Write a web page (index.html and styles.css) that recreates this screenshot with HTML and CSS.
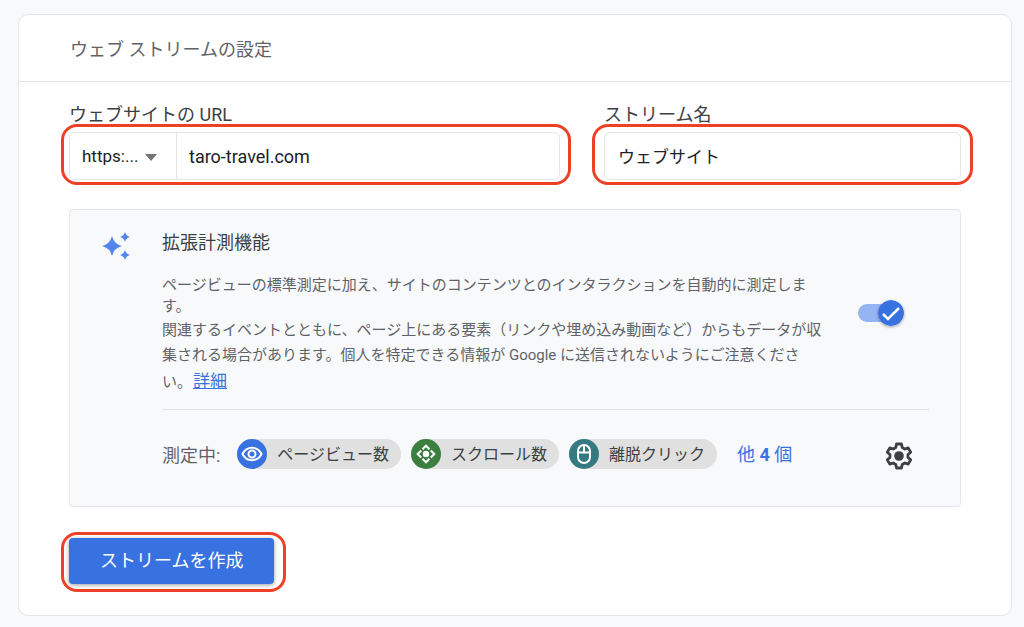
FILE: index.html
```html
<!DOCTYPE html>
<html lang="ja">
<head>
<meta charset="utf-8">
<meta name="viewport" content="width=device-width, initial-scale=1">
<title>ウェブ ストリームの設定</title>
<link rel="stylesheet" href="styles.css">
</head>
<body>
<main class="card">
  <header class="card-header">
    <h1 class="card-title">ウェブ ストリームの設定</h1>
  </header>
  <form class="card-body">
    <div class="fields">
      <div class="field">
        <label class="field-label" for="url">ウェブサイトの URL</label>
        <div class="control highlight">
          <div class="protocol">
            <select class="protocol-select" aria-label="プロトコル">
              <option>https:...</option>
              <option>http:...</option>
            </select>
            <svg class="caret" viewBox="0 0 12 7" aria-hidden="true"><path d="M0 0h12L6 7z"/></svg>
          </div>
          <input class="text-input" id="url" type="text" value="taro-travel.com">
        </div>
      </div>
      <div class="field">
        <label class="field-label" for="name">ストリーム名</label>
        <div class="control highlight">
          <input class="text-input name-input" id="name" type="text" value="ウェブサイト">
        </div>
      </div>
    </div>

    <section class="panel">
      <svg class="sparkle" viewBox="0 0 29 29" aria-hidden="true">
        <path d="M10 4Q12 12 20 14Q12 16 10 24Q8 16 0 14Q8 12 10 4zM23 0Q24 4 28 5Q24 6 23 10Q22 6 18 5Q22 4 23 0zM23 18Q24 22 28 23Q24 24 23 28Q22 24 18 23Q22 22 23 18z"/>
      </svg>
      <div class="panel-content">
        <h2 class="panel-title">拡張計測機能</h2>
        <div class="description">
          <div class="description-text">
            <p class="lead">ページビューの標準測定に加え、サイトのコンテンツとのインタラクションを自動的に測定します。</p>
            <p class="note">関連するイベントとともに、ページ上にある要素（リンクや埋め込み動画など）からもデータが収集される場合があります。個人を特定できる情報が Google に送信されないようにご注意ください。<a class="more-link" href="#">詳細</a></p>
          </div>
          <label class="toggle">
            <input class="toggle-input" type="checkbox" checked aria-label="拡張計測機能">
            <svg class="toggle-knob" viewBox="0 0 26 26" aria-hidden="true">
              <circle cx="13" cy="13" r="13"/>
              <path d="M5 14l5 5L21 8"/>
            </svg>
          </label>
        </div>
        <div class="measuring">
          <span class="measuring-label">測定中:</span>
          <ul class="chips">
            <li class="chip">
              <svg class="chip-icon blue" viewBox="0 0 30 30" aria-hidden="true">
                <path d="M5.500 15C7.500 11 11 8.800 15 8.800S22.500 11 24.500 15C22.500 19 19 21.200 15 21.200S7.500 19 5.500 15z"/>
                <circle cx="15" cy="15" r="3.500"/>
              </svg>
              <span class="chip-text">ページビュー数</span>
            </li>
            <li class="chip">
              <svg class="chip-icon green" viewBox="0 0 30 30" aria-hidden="true">
                <circle class="solid" cx="15" cy="15" r="3.200"/>
                <path d="M11.500 10.200L15 6.700l3.500 3.500M11.500 19.800l3.500 3.500 3.500-3.500M10.200 11.500L6.700 15l3.500 3.500M19.800 11.500l3.500 3.500-3.500 3.500"/>
              </svg>
              <span class="chip-text">スクロール数</span>
            </li>
            <li class="chip">
              <svg class="chip-icon teal" viewBox="0 0 30 30" aria-hidden="true">
                <rect x="9" y="6" width="12" height="18" rx="6"/>
                <path d="M9 13.500h12M15 6v7.500"/>
              </svg>
              <span class="chip-text">離脱クリック</span>
            </li>
          </ul>
          <a class="others" href="#">他 <strong>4</strong> 個</a>
          <button class="gear" type="button" aria-label="設定">
            <svg class="gear-icon" viewBox="0 0 28 28" aria-hidden="true">
              <path d="M11.500 2h5l.7 3.500 2.600 1.500 3.400-1.100 2.500 4.300L23 12.500v3l2.700 2.300-2.500 4.300-3.400-1.100-2.600 1.500-.7 3.500h-5l-.7-3.500L8.200 21l-3.400 1.100-2.500-4.300L5 15.500v-3l-2.700-2.300 2.500-4.300L8.200 7l2.600-1.500z"/>
              <circle cx="14" cy="14" r="4.800"/>
            </svg>
          </button>
        </div>
      </div>
    </section>

    <div class="submit highlight">
      <button class="submit-button" type="button">ストリームを作成</button>
    </div>
  </form>
</main>
</body>
</html>
```
FILE: styles.css
```css
* {
  box-sizing: border-box;
}

body {
  margin: 0;
  padding: 14px 12px 11px 18px;
  background: #f8f9fb;
  color: #3c4043;
  font-family: Roboto, "Noto Sans CJK JP", sans-serif;
  font-size: 18px;
}

h1, h2, p, ul {
  margin: 0;
  padding: 0;
  font-weight: 400;
}

button, input, select {
  font: inherit;
  color: inherit;
}

.card {
  background: #fff;
  border: 1px solid #e3e5e8;
  border-radius: 10px;
}

.card-header {
  padding: 22px 51px 18px;
  border-bottom: 1px solid #e3e5e8;
}

.card-title {
  color: #5f6368;
  font-size: 18px;
  line-height: 26px;
}

.card-body {
  padding: 20px 50px 31px;
}

.fields {
  display: grid;
  grid-template-columns: 11fr 8fr;
  gap: 44px;
}

.field-label {
  display: block;
  height: 30px;
  line-height: 26px;
}

/* Red frame that calls attention to a control */
.highlight {
  position: relative;
}

.highlight::after {
  content: "";
  position: absolute;
  inset: -6px -12px -8px -8px;
  border: 3px solid #ee4027;
  border-radius: 16px;
  pointer-events: none;
}

.control {
  display: flex;
  height: 48px;
  border: 1px solid #e3e5e8;
  border-radius: 6px;
  color: #202124;
}

.control.highlight::after {
  top: -9px;
  left: -9px;
  bottom: -6px;
}

.field + .field .highlight::after {
  left: -13px;
  right: -13px;
}

.protocol {
  position: relative;
  flex: 0 0 107px;
  display: flex;
  border-right: 1px solid #e3e5e8;
}

.protocol-select {
  width: 100%;
  padding: 0 0 0 12px;
  border: 0;
  background: transparent;
  font-size: 17px;
  appearance: none;
}

.caret {
  position: absolute;
  top: 21px;
  right: 19px;
  width: 12px;
  height: 7px;
  fill: #757575;
  pointer-events: none;
}

.text-input {
  flex: 1;
  min-width: 0;
  padding: 0 12px;
  border: 0;
  background: transparent;
}

.name-input {
  padding: 0 13px 2px;
  font-size: 17px;
}

.panel {
  display: flex;
  margin-top: 29px;
  padding: 20px 31px 36px;
  background: #f8f9fb;
  border: 1px solid #e3e5e8;
  border-radius: 4px;
}

.sparkle {
  flex: none;
  width: 29px;
  height: 29px;
  margin: 2px 31px 0 1px;
  fill: #5484ed;
}

.panel-content {
  flex: 1;
  min-width: 0;
}

.panel-title {
  font-size: 18px;
  line-height: 26px;
}

.description {
  display: flex;
  align-items: center;
  justify-content: space-between;
  padding: 19px 25px 14px 0;
  border-bottom: 1px solid #dfe1e5;
}

.description-text {
  max-width: 44em;
  color: #5f6368;
  font-size: 15px;
}

.lead {
  line-height: 21px;
}

.note {
  margin-top: 1px;
  line-height: 25px;
}

.more-link {
  display: inline-block;
  margin-left: 1px;
  color: #3871e0;
  font-size: 17px;
  line-height: 26px;
}

.toggle {
  position: relative;
  flex: none;
  display: flex;
  margin-bottom: 44px;
}

.toggle-input {
  width: 46px;
  height: 18px;
  margin: 0;
  border-radius: 9px;
  background: #95b4f3;
  appearance: none;
}

.toggle-knob {
  position: absolute;
  top: -4px;
  right: 0;
  width: 26px;
  height: 26px;
  border-radius: 50%;
  box-shadow: 0 1px 3px rgba(0, 0, 0, 0.35);
  fill: #3871e0;
}

.toggle-knob path {
  fill: none;
  stroke: #fff;
  stroke-width: 2.5;
}

.measuring {
  display: flex;
  align-items: center;
  margin-top: 28px;
}

.measuring-label {
  color: #5f6368;
  margin-right: 17px;
}

.chips {
  display: flex;
  gap: 10px;
  list-style: none;
}

.chip {
  display: flex;
  align-items: center;
  gap: 10px;
  height: 30px;
  padding-right: 12px;
  border-radius: 15px;
  background: #e0e0e0;
  font-size: 16px;
  white-space: nowrap;
}

.chip-text {
  padding-bottom: 2px;
}

.chip-icon {
  width: 30px;
  height: 30px;
  border-radius: 50%;
  fill: none;
  stroke: #fff;
  stroke-width: 2;
}

.chip-icon .solid {
  fill: #fff;
  stroke: none;
}

.blue {
  background: #3871e0;
}

.green {
  background: #3b7f3f;
}

.teal {
  background: #357a80;
}

.others {
  margin-left: 20px;
  padding-bottom: 2px;
  color: #3871e0;
  text-decoration: none;
}

.gear {
  display: flex;
  margin-left: auto;
  margin-right: 16px;
  padding: 4px 0 0;
  border: 0;
  background: none;
}

.gear-icon {
  width: 28px;
  height: 28px;
  fill: none;
  stroke: #3c4043;
  stroke-width: 2.8;
  stroke-linejoin: round;
}

.gear-icon circle {
  fill: #3c4043;
  stroke: none;
}

.submit {
  width: fit-content;
  margin-top: 31px;
}

.submit-button {
  display: block;
  height: 46px;
  padding: 0 31px 4px;
  border: 0;
  border-radius: 4px;
  background: #3871e0;
  box-shadow: 0 1px 4px rgba(0, 0, 0, 0.4);
  color: #fff;
}
```
